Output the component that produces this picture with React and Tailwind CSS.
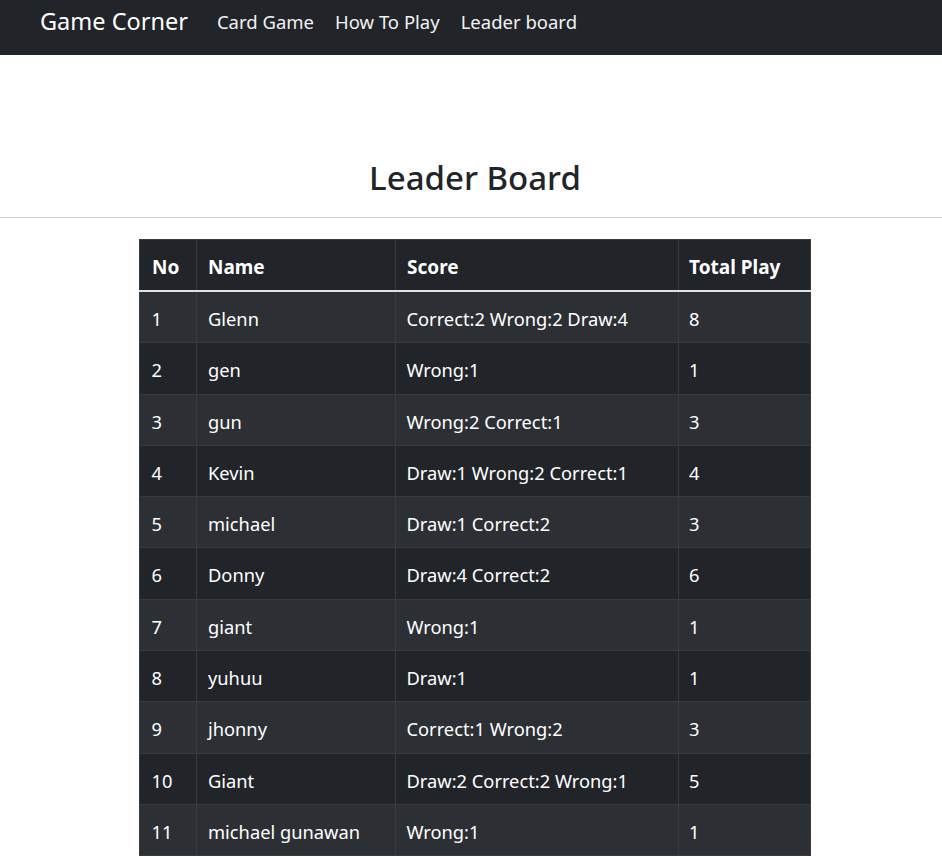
import React from "react";

const rows = [
  [1, "Glenn", "Correct:2 Wrong:2 Draw:4", 8],
  [2, "gen", "Wrong:1", 1],
  [3, "gun", "Wrong:2 Correct:1", 3],
  [4, "Kevin", "Draw:1 Wrong:2 Correct:1", 4],
  [5, "michael", "Draw:1 Correct:2", 3],
  [6, "Donny", "Draw:4 Correct:2", 6],
  [7, "giant", "Wrong:1", 1],
  [8, "yuhuu", "Draw:1", 1],
  [9, "jhonny", "Correct:1 Wrong:2", 3],
  [10, "Giant", "Draw:2 Correct:2 Wrong:1", 5],
  [11, "michael gunawan", "Wrong:1", 1],
];

export default function App() {
  return (
    <div className="min-h-[857px] bg-white font-['Noto_Sans',sans-serif] text-[#212529]">
      <nav className="flex h-[55px] items-center bg-[#212529] pb-[11px] pl-[40px]">
        <span className="text-[23.5px] leading-none text-white">Game Corner</span>
        <div className="ml-[29px] flex gap-[21px] text-[18.5px] leading-none text-[#f2f2f2]">
          <span>Card Game</span>
          <span>How To Play</span>
          <span>Leader board</span>
        </div>
      </nav>
      <h1 className="mt-[103px] pl-[8px] text-center text-[33px] font-medium leading-[40px]">Leader Board</h1>
      <hr className="mt-[19px] border-0 border-t border-[#cfcfcf]" />
      <div className="mt-[21px] pl-[139px]">
        <table className="w-[671px] table-fixed border-collapse border border-[#373b3e] text-[18.3px] text-white">
          <colgroup>
            <col className="w-[57px]" />
            <col className="w-[199px]" />
            <col className="w-[283px]" />
            <col className="w-[132px]" />
          </colgroup>
          <thead>
            <tr className="border-b-2 border-[#dee2e6] bg-[#212529] text-[19px]">
              <th className="border-x border-[#373b3e] px-[12px] pb-[11px] pt-[15px] text-left font-bold leading-[24px]">No</th>
              <th className="border-x border-[#373b3e] px-[11px] pb-[11px] pt-[15px] text-left font-bold leading-[24px]">Name</th>
              <th className="border-x border-[#373b3e] px-[11px] pb-[11px] pt-[15px] text-left font-bold leading-[24px]">Score</th>
              <th className="border-x border-[#373b3e] px-[10px] pb-[11px] pt-[15px] text-left font-bold leading-[24px]">Total Play</th>
            </tr>
          </thead>
          <tbody>
            {rows.map((r, i) => (
              <tr key={r[0]} className={i % 2 === 0 ? "bg-[#2c3034]" : "bg-[#212529]"}>
                <td className="border border-[#373b3e] px-[11.5px] pb-[11.3px] pt-[15px] leading-[24px]">{r[0]}</td>
                <td className="border border-[#373b3e] px-[11px] pb-[11.3px] pt-[15px] leading-[24px]">{r[1]}</td>
                <td className="border border-[#373b3e] px-[10.5px] pb-[11.3px] pt-[15px] leading-[24px]">{r[2]}</td>
                <td className="border border-[#373b3e] px-[10px] pb-[11.3px] pt-[15px] leading-[24px]">{r[3]}</td>
              </tr>
            ))}
          </tbody>
        </table>
      </div>
    </div>
  );
}
